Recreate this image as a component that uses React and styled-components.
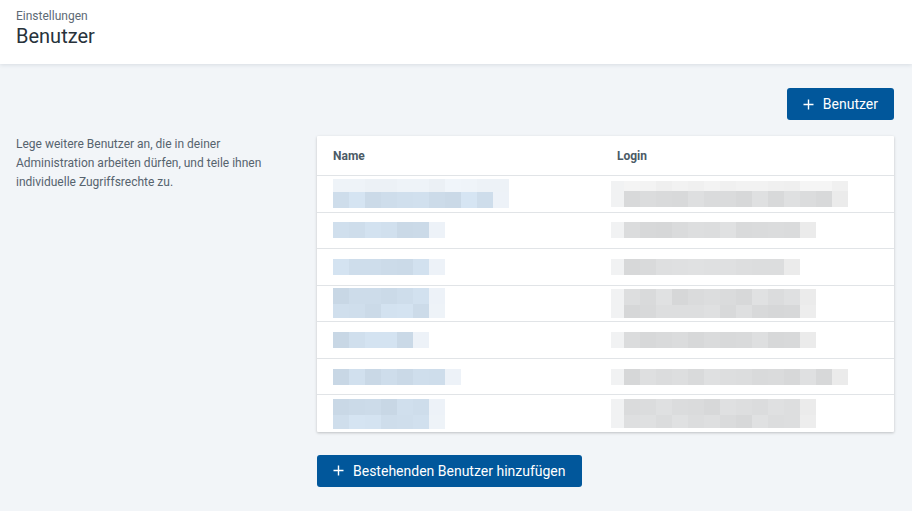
import React from 'react';
import styled, { createGlobalStyle } from 'styled-components';

const GlobalStyle = createGlobalStyle`
  html, body {
    margin: 0;
    padding: 0;
    background: #f2f5f8;
    font-family: Roboto, "Liberation Sans", Arial, sans-serif;
  }
  * { box-sizing: border-box; }
`;

const Header = styled.header`
  background: #fff;
  height: 64px;
  padding: 9px 16px 0;
  box-shadow: 0 1px 4px rgba(30, 50, 70, 0.12);
`;

const Crumb = styled.div`
  font-size: 12px;
  line-height: 15px;
  color: #5d6a75;
`;

const Title = styled.h1`
  margin: 0;
  font-size: 20px;
  font-weight: 400;
  line-height: 24px;
  color: #27323b;
`;

const Main = styled.main`
  padding: 24px 18px 24px 16px;
`;

const Toolbar = styled.div`
  display: flex;
  justify-content: flex-end;
  margin-bottom: 16px;
`;

const Button = styled.button`
  display: inline-flex;
  align-items: center;
  gap: 9px;
  height: 32px;
  padding: 0 16px;
  border: 0;
  border-radius: 3px;
  background: #01579b;
  color: #fff;
  font-family: inherit;
  font-size: 14px;
  white-space: nowrap;
  cursor: pointer;
`;

const Layout = styled.div`
  display: grid;
  grid-template-columns: 285px 1fr;
  column-gap: 16px;
`;

const Intro = styled.p`
  margin: -1px 0 0;
  max-width: 262px;
  font-size: 12px;
  line-height: 19px;
  color: #56636e;
`;

const Card = styled.div`
  background: #fff;
  box-shadow: 0 1px 3px rgba(0, 0, 0, 0.22);
  border-radius: 1px;
`;

const Row = styled.div`
  display: grid;
  grid-template-columns: 284px 1fr;
  height: ${p => (p.$head ? '40px' : '36.57px')};
  border-bottom: ${p => (p.$last ? '0' : '1px solid #e1e4e7')};
`;

const HeadCell = styled.div`
  display: flex;
  align-items: center;
  padding-left: 16px;
  font-size: 12px;
  font-weight: 700;
  color: #4b5a66;
`;

const Cell = styled.div`
  display: flex;
  flex-direction: column;
  justify-content: center;
  padding-left: ${p => p.$pad}px;
`;

const Strip = styled.div`
  display: flex;
  height: ${p => p.$h}px;
`;

const Block = styled.div`
  width: 16px;
  flex: none;
  height: 100%;
`;

const Footer = styled.div`
  margin-top: 23px;
`;

const Plus = () => (
  <svg width="11" height="11" viewBox="0 0 11 11" fill="none">
    <path d="M5.5 0.5v10M0.5 5.5h10" stroke="#fff" strokeWidth="1.4" />
  </svg>
);

let seed = 7;
const rand = () => {
  seed = (seed * 9301 + 49297) % 233280;
  return seed / 233280;
};

const tone = (base, spread) => {
  const d = Math.round((rand() - 0.5) * spread);
  return `rgb(${base[0] + d},${base[1] + d},${base[2] + d})`;
};

const BLUE = [207, 222, 236];
const BLUE_FAINT = [238, 243, 248];
const GRAY = [219, 220, 221];
const GRAY_FAINT = [242, 242, 242];

const strip = (h, n, base, spread, edge) => {
  const blocks = [];
  for (let i = 0; i < n; i++) blocks.push(tone(base, spread));
  if (edge) blocks.push(edge);
  return { h, blocks };
};

// blurred rows: name bar length, login bar length, tall bars
const rowsSpec = [
  { name: 10, login: 13, tall: false, top: true },
  { name: 6, login: 11, tall: false },
  { name: 6, login: 10, tall: false },
  { name: 6, login: 11, tall: true },
  { name: 5, login: 11, tall: false },
  { name: 7, login: 13, tall: false },
  { name: 6, login: 11, tall: true },
];

const rows = rowsSpec.map(r => {
  const nameStrips = [];
  const loginStrips = [];
  if (r.top) {
    nameStrips.push(strip(13, r.name + 1, BLUE_FAINT, 6));
    loginStrips.push(strip(10, r.login + 1, GRAY_FAINT, 6));
  }
  nameStrips.push(strip(16, r.name, BLUE, 14, '#edf2f8'));
  loginStrips.push(strip(16, r.login, GRAY, 10, '#ebebeb'));
  if (r.tall) {
    nameStrips.push(strip(14, r.name, BLUE, 12, '#eef3f8'));
    loginStrips.push(strip(13, r.login, GRAY, 10, '#ededed'));
  }
  return { nameStrips, loginStrips };
});

const Mosaic = ({ strips, lead }) =>
  strips.map((s, i) => (
    <Strip key={i} $h={s.h}>
      {lead > 0 && <Block style={{ width: lead, background: '#f1f2f3' }} />}
      {s.blocks.map((c, j) => (
        <Block key={j} style={{ background: c }} />
      ))}
    </Strip>
  ));

export default function App() {
  return (
    <>
      <GlobalStyle />
      <Header>
        <Crumb>Einstellungen</Crumb>
        <Title>Benutzer</Title>
      </Header>
      <Main>
        <Toolbar>
          <Button>
            <Plus />
            Benutzer
          </Button>
        </Toolbar>
        <Layout>
          <Intro>
            Lege weitere Benutzer an, die in deiner Administration arbeiten
            dürfen, und teile ihnen individuelle Zugriffsrechte zu.
          </Intro>
          <div>
            <Card>
              <Row $head>
                <HeadCell>Name</HeadCell>
                <HeadCell>Login</HeadCell>
              </Row>
              {rows.map((r, i) => (
                <Row key={i} $last={i === rows.length - 1}>
                  <Cell $pad={16}>
                    <Mosaic strips={r.nameStrips} lead={0} />
                  </Cell>
                  <Cell $pad={10}>
                    <Mosaic strips={r.loginStrips} lead={13} />
                  </Cell>
                </Row>
              ))}
            </Card>
            <Footer>
              <Button>
                <Plus />
                Bestehenden Benutzer hinzufügen
              </Button>
            </Footer>
          </div>
        </Layout>
      </Main>
    </>
  );
}
